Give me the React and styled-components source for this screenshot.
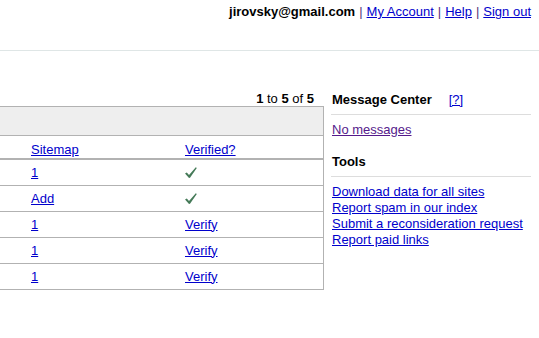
import React from 'react'
import styled, { createGlobalStyle } from 'styled-components'

const GlobalStyle = createGlobalStyle`
  body {
    margin: 0;
    background: #ffffff;
    font-family: "Liberation Sans", Arial, sans-serif;
    font-size: 13px;
    line-height: 16px;
    color: #000000;
  }
`

const rows = [
  { sitemap: '1', verified: true },
  { sitemap: 'Add', verified: true },
  { sitemap: '1', verified: false },
  { sitemap: '1', verified: false },
  { sitemap: '1', verified: false },
]

const tools = [
  'Download data for all sites',
  'Report spam in our index',
  'Submit a reconsideration request',
  'Report paid links',
]

function Check() {
  return (
    <svg width="12" height="12" viewBox="0 0 12 12">
      <polygon points="0,6.5 1.8,5.4 4,8 10.8,0.2 11.8,0.9 5,10.8 4,11" fill="#457a58" />
    </svg>
  )
}

function App() {
  return (
    <>
      <GlobalStyle />
      <TopBar>
        <User>jirovsky@gmail.com</User>
        <Sep>|</Sep>
        <Link href="#">My Account</Link>
        <Sep>|</Sep>
        <Link href="#">Help</Link>
        <Sep>|</Sep>
        <Link href="#">Sign out</Link>
      </TopBar>

      <Main>
        <Left>
          <Paging><b>1</b> to <b>5</b> of <b>5</b></Paging>
          <Table>
            <GrayBar />
            <HeadRow>
              <Cell><Link href="#">Sitemap</Link></Cell>
              <Cell><Link href="#">Verified?</Link></Cell>
            </HeadRow>
            {rows.map((r, i) => (
              <Row key={i}>
                <Cell><Link href="#">{r.sitemap}</Link></Cell>
                <Cell>{r.verified ? <Check /> : <Link href="#">Verify</Link>}</Cell>
              </Row>
            ))}
          </Table>
        </Left>

        <Side>
          <SideHead>
            Message Center
            <Help href="#">[?]</Help>
          </SideHead>
          <Visited href="#">No messages</Visited>
          <SideHead $top={16}>Tools</SideHead>
          <ToolList>
            {tools.map((t) => (
              <Link key={t} href="#">{t}</Link>
            ))}
          </ToolList>
        </Side>
      </Main>
    </>
  )
}

export default App

const TopBar = styled.div`
  box-sizing: border-box;
  height: 51px;
  padding: 4px 8px 0 0;
  border-bottom: 1px solid #dfe6e6;
  display: flex;
  justify-content: flex-end;
  align-items: flex-start;
  white-space: nowrap;
`

const User = styled.b`
  font-weight: bold;
`

const Sep = styled.span`
  color: #55307a;
  margin: 0 4px;
`

const Link = styled.a`
  color: #0000cc;
  text-decoration: underline;
`

const Visited = styled(Link)`
  color: #551a8b;
  margin: 7px 0 0 1px;
`

const Help = styled(Link)`
  font-weight: normal;
  margin-left: 17px;
`

const Main = styled.div`
  display: flex;
  align-items: flex-start;
  gap: 7px;
  padding-top: 41px;
`

const Left = styled.div`
  width: 324px;
  display: flex;
  flex-direction: column;
`

const Paging = styled.div`
  height: 14px;
  line-height: 14px;
  text-align: right;
  padding-right: 10px;
`

const Table = styled.div`
  border-top: 1px solid #b2b2b2;
  border-right: 1px solid #b2b2b2;
  border-bottom: 1px solid #b2b2b2;
`

const GrayBar = styled.div`
  height: 28px;
  background: #eeeeee;
  border-bottom: 1px solid #b2b2b2;
`

const Row = styled.div`
  display: grid;
  grid-template-columns: 154px 1fr;
  height: 25px;
  align-items: center;
  & + & {
    border-top: 1px solid #b2b2b2;
  }
`

const HeadRow = styled(Row)`
  height: 23px;
  align-items: start;
  padding-top: 6px;
  box-sizing: border-box;
  border-bottom: 1px solid #b2b2b2;
`

const Cell = styled.div`
  padding-left: 31px;
  display: flex;
  align-items: center;
  height: 16px;
`

const Side = styled.div`
  width: 200px;
  display: flex;
  flex-direction: column;
  align-items: flex-start;
`

const SideHead = styled.div`
  align-self: stretch;
  font-weight: bold;
  padding: 0 0 6px 1px;
  margin-top: ${(p) => p.$top || 0}px;
  border-bottom: 1px solid #dddddd;
`

const ToolList = styled.div`
  display: flex;
  flex-direction: column;
  align-items: flex-start;
  margin: 7px 0 0 1px;
`
